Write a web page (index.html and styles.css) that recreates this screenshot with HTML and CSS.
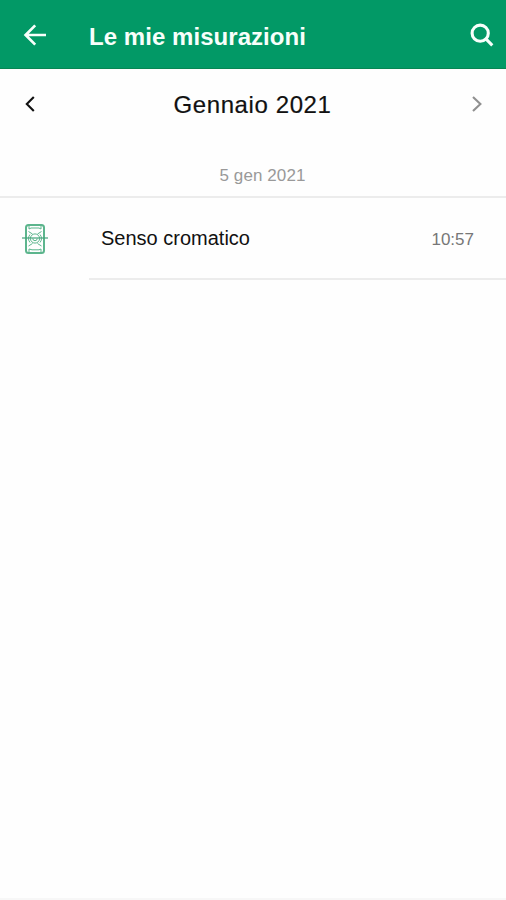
FILE: index.html
```html
<!DOCTYPE html>
<html lang="it">
<head>
  <meta charset="UTF-8">
  <meta name="viewport" content="width=device-width, initial-scale=1.0">
  <title>Le mie misurazioni</title>
  <link rel="stylesheet" href="styles.css">
</head>
<body>
  <header class="app-bar">
    <button class="icon-button" aria-label="Indietro">
      <svg width="24" height="24" viewBox="0 0 24 24">
        <path d="M23 12H2.5M12.2 2.4L2.6 12l9.6 9.6"/>
      </svg>
    </button>
    <h1>Le mie misurazioni</h1>
    <button class="icon-button search" aria-label="Cerca">
      <svg width="24" height="24" viewBox="0 0 24 24">
        <circle cx="10.2" cy="10.2" r="8.1"/>
        <path d="M15.9 15.9l6.4 6.4"/>
      </svg>
    </button>
  </header>

  <main>
    <div class="month">
      <button class="icon-button prev" aria-label="Mese precedente">
        <svg width="10" height="16" viewBox="0 0 10 16">
          <path d="M8.8 .9L1.8 8l7 7.1"/>
        </svg>
      </button>
      <h2>Gennaio 2021</h2>
      <button class="icon-button next" aria-label="Mese successivo">
        <svg width="10" height="16" viewBox="0 0 10 16">
          <path d="M1 .9L8.4 8 1 15.1"/>
        </svg>
      </button>
    </div>

    <div class="day">5 gen 2021</div>

    <div class="entry">
      <svg class="entry-icon" width="26" height="30" viewBox="0 0 26 30">
        <rect x="4" y="1" width="18" height="28" rx="2.5"/>
        <path class="thin" d="M7 2v3l2-1h8l2 1V2M7 28v-3l3 .8h7l2-.8v3M6.5 7.5l4 2.5M19.5 7.5l-4 2.5M6.5 22l4-2.5M19.5 22l-4-2.5"/>
        <path class="thin" d="M8 10.5a6.5 6.5 0 0 0 0 8M18 10.5a6.5 6.5 0 0 1 0 8"/>
        <circle class="thin" cx="13" cy="14.5" r="4.6"/>
        <path class="thin" d="M10.8 14.5a2.2 2.2 0 0 0 4.4 0"/>
        <path class="scan" d="M0 14h26"/>
      </svg>
      <div class="entry-body">
        <span class="name">Senso cromatico</span>
        <span class="time">10:57</span>
      </div>
    </div>
  </main>

  <footer class="bottom-edge"></footer>
</body>
</html>
```
FILE: styles.css
```css
* {
  box-sizing: border-box;
}
body {
  display: flex;
  flex-direction: column;
  height: 100vh;
  margin: 0;
  background: #fefefe;
  color: #111;
  font-family: "Liberation Sans", Arial, sans-serif;
}
h1, h2 {
  margin: 0;
}
svg {
  display: block;
  fill: none;
  stroke: currentColor;
  stroke-width: 2.7;
}
.icon-button {
  padding: 0;
  border: none;
  background: none;
  color: inherit;
  cursor: pointer;
}
.app-bar {
  display: flex;
  align-items: center;
  height: 69px;
  padding: 1px 12px 0 23px;
  border-bottom: 1px solid #078653;
  background: #029966;
  color: #f8fffb;
}
.app-bar h1 {
  flex: 1;
  margin-left: 42px;
  padding-top: 4px;
  font-size: 24px;
  line-height: 28px;
  letter-spacing: 0.05px;
}
.search svg {
  stroke-width: 3.1;
}
main {
  flex: 1;
}
.month {
  display: flex;
  align-items: center;
  justify-content: space-between;
  height: 70px;
  padding: 0 24px 0 25px;
}
.month h2 {
  font-size: 24px;
  font-weight: normal;
  letter-spacing: 0.6px;
  -webkit-text-stroke: 0.2px;
  padding: 2px 2px 0 0;
}
.month svg {
  stroke-width: 2.1;
}
.next {
  color: #909090;
}
.day {
  height: 59px;
  padding: 27px 0 0 19px;
  border-bottom: 2px solid #ececec;
  color: #999;
  font-size: 17px;
  line-height: 20px;
  letter-spacing: 0.1px;
  text-align: center;
}
.entry {
  display: flex;
  align-items: center;
  height: 82px;
  padding-left: 22px;
}
.entry-icon {
  color: #5cb58d;
  stroke-width: 2;
}
.entry-icon .thin {
  stroke-width: 1;
}
.entry-icon .scan {
  stroke: #43a47a;
  stroke-width: 1.2;
}
.entry-body {
  display: flex;
  flex: 1;
  align-items: center;
  justify-content: space-between;
  height: 100%;
  margin-left: 41px;
  padding: 2px 32px 0 12px;
  border-bottom: 2px solid #ececec;
}
.name {
  padding-bottom: 2px;
  font-size: 20px;
}
.time {
  padding-top: 2px;
  color: #777;
  font-size: 17px;
}
.bottom-edge {
  height: 2px;
  background: #f7f7f7;
}
```
